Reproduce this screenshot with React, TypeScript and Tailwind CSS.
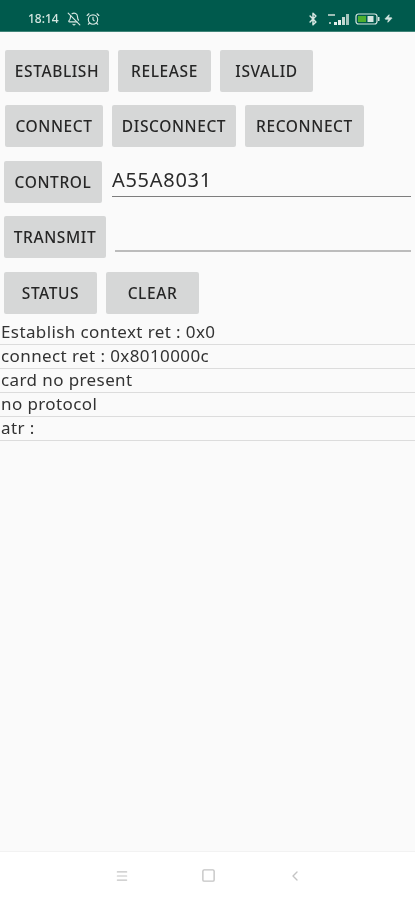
import { AlarmClock, BellOff, Bluetooth, ChevronLeft, Menu, Square, Zap } from "lucide-react"

function Btn({ label, w }: { label: string; w: string }) {
  return (
    <div className={`${w} h-[42px] shrink-0 bg-[#d6d7d7] rounded-[2px] flex items-center justify-center pt-[1px] font-['Noto_Sans',sans-serif] text-[15.5px] font-medium tracking-[0.6px] text-[#262626]`}>
      {label}
    </div>
  )
}

const lines = ["Establish context ret : 0x0", "connect ret : 0x8010000c", "card no present", "no protocol", "atr :"]

export default function App() {
  return (
    <div className="w-[415px] h-[900px] flex flex-col bg-[#fafafa] overflow-hidden font-['Noto_Sans',sans-serif] blur-[0.5px]">
      {/* status bar */}
      <div className="h-[32px] shrink-0 bg-[#005a4d] border-b border-[#3f8478] flex items-center pl-[28px] pr-[22px] pt-[8px] pb-[2px] text-[#d5e6e1]">
        <span className="text-[12px] font-medium">18:14</span>
        <BellOff size={14} className="ml-[8px]" />
        <AlarmClock size={14} className="ml-[5px]" />
        <div className="ml-auto flex items-center">
          <Bluetooth size={14} strokeWidth={2.6} />
          <svg width="24" height="14" viewBox="0 0 24 14" className="ml-[7px]">
            <rect x="1" y="2" width="7" height="2" fill="#9dbdb5" />
            <rect x="2" y="10" width="2" height="2" fill="#9dbdb5" />
            <rect x="7" y="10" width="3" height="3" fill="#e4efec" />
            <rect x="11" y="8" width="3" height="5" fill="#e4efec" />
            <rect x="15" y="5" width="3" height="8" fill="#c5d9d3" />
            <rect x="19" y="2" width="3" height="11" fill="#a6c5bd" />
          </svg>
          <svg width="25" height="12" viewBox="0 0 25 12" className="ml-[4px]">
            <rect x="1" y="1" width="21" height="10" rx="2.5" fill="none" stroke="#d5e6e1" strokeWidth="1.2" />
            <rect x="3" y="3" width="8" height="6" fill="#4caf2f" />
            <rect x="12.5" y="3" width="6" height="6" fill="#d5e6e1" />
            <rect x="23" y="4" width="1.5" height="4" fill="#d5e6e1" />
          </svg>
          <Zap size={9} fill="#d5e6e1" className="ml-[4px]" />
        </div>
      </div>

      {/* main content */}
      <div className="flex-1 flex flex-col">
        <div className="flex gap-[9px] pl-[5px] mt-[18px]">
          <Btn label="ESTABLISH" w="w-[104px]" />
          <Btn label="RELEASE" w="w-[93px]" />
          <Btn label="ISVALID" w="w-[93px]" />
        </div>
        <div className="flex gap-[9px] pl-[5px] mt-[13px]">
          <Btn label="CONNECT" w="w-[98px]" />
          <Btn label="DISCONNECT" w="w-[124px]" />
          <Btn label="RECONNECT" w="w-[119px]" />
        </div>
        <div className="flex pl-[4px] mt-[14px]">
          <Btn label="CONTROL" w="w-[98px]" />
          <div className="ml-[10px] w-[299px] h-[36px] border-b border-[#7d7d7d] text-[20px] leading-[38px] tracking-[0.7px] text-[#2b2b2b]">
            A55A8031
          </div>
        </div>
        <div className="flex pl-[4px] mt-[13px]">
          <Btn label="TRANSMIT" w="w-[102px]" />
          <div className="ml-[9px] w-[296px] h-[36px] border-b-2 border-[#bcbcbc]" />
        </div>
        <div className="flex gap-[9px] pl-[4px] mt-[14px]">
          <Btn label="STATUS" w="w-[93px]" />
          <Btn label="CLEAR" w="w-[93px]" />
        </div>
        <div className="mt-[7px] flex flex-col">
          {lines.map((line) => (
            <div key={line} className="h-[24px] border-b border-[#dcdcdc] pl-[1px] text-[17px] leading-[21px] tracking-[0.4px] text-[#333333]">
              {line}
            </div>
          ))}
        </div>
      </div>

      {/* nav bar */}
      <div className="h-[49px] shrink-0 bg-white border-t border-[#f2f2f2] flex items-center text-[#c4c4c4] pb-[1px]">
        <Menu size={14} className="ml-[115px]" />
        <Square size={15} strokeWidth={2.2} className="ml-[72px]" />
        <ChevronLeft size={16} className="ml-[71px]" />
      </div>
    </div>
  )
}
